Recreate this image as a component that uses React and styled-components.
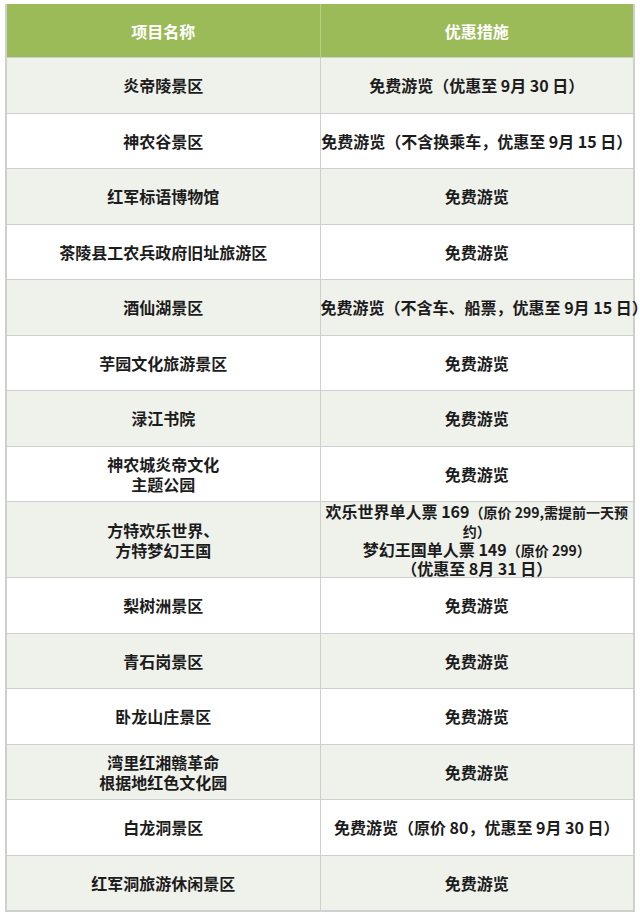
import React from "react";
import styled, { createGlobalStyle } from "styled-components";

const GlobalStyle = createGlobalStyle`
  body {
    margin: 0;
    background: #ffffff;
    font-family: "Noto Sans CJK SC", "Noto Sans", sans-serif;
  }
`;

const Page = styled.div`
  padding: 4px 5px 0 5px;
  width: 640px;
  box-sizing: border-box;
`;

const Table = styled.table`
  width: 630px;
  border-collapse: collapse;
  table-layout: fixed;
  border-left: 2px solid #cfcfcf;
  border-right: 2px solid #cfcfcf;
  border-bottom: 2px solid #cfcfcf;
`;

const HeadCell = styled.th`
  background: #9bbb59;
  color: #ffffff;
  font-size: 16px;
  font-weight: 700;
  height: 53px;
  padding: 0;
  text-align: center;
  border-right: 1px solid #b7cf8a;
  &:last-child {
    border-right: none;
  }
`;

const Row = styled.tr`
  height: ${(p) => p.$h || 55.5}px;
  background: ${(p) => (p.$shade ? "#eff1eb" : "#ffffff")};
`;

const Cell = styled.td`
  padding: 0;
  text-align: center;
  vertical-align: middle;
  font-size: 16px;
  font-weight: 700;
  color: #1c1c1c;
  line-height: ${(p) => p.$lh || 20}px;
  white-space: nowrap;
  overflow: visible;
  border-top: 1px solid #cfcfcf;
  border-right: 1px solid #cfcfcf;
  &:last-child {
    border-right: none;
  }
`;

const Small = styled.span`
  font-size: 14px;
  font-weight: 700;
`;

const rows = [
  ["炎帝陵景区", "免费游览（优惠至 9月 30 日）"],
  ["神农谷景区", "免费游览（不含换乘车，优惠至 9月 15 日）"],
  ["红军标语博物馆", "免费游览"],
  ["茶陵县工农兵政府旧址旅游区", "免费游览"],
  ["酒仙湖景区", "免费游览（不含车、船票，优惠至 9月 15 日）"],
  ["芋园文化旅游景区", "免费游览"],
  ["渌江书院", "免费游览"],
  [["神农城炎帝文化", "主题公园"], "免费游览"],
  ["fangte", "fangte"],
  ["梨树洲景区", "免费游览"],
  ["青石岗景区", "免费游览"],
  ["卧龙山庄景区", "免费游览"],
  [["湾里红湘赣革命", "根据地红色文化园"], "免费游览"],
  ["白龙洞景区", "免费游览（原价 80，优惠至 9月 30 日）"],
  ["红军洞旅游休闲景区", "免费游览"],
];

const Lines = ({ value }) =>
  Array.isArray(value)
    ? value.map((line, i) => (
        <React.Fragment key={i}>
          {i > 0 && <br />}
          {line}
        </React.Fragment>
      ))
    : value;

const FangteRow = ({ shade }) => (
  <Row $shade={shade} $h={74}>
    <Cell>
      方特欢乐世界、
      <br />
      方特梦幻王国
    </Cell>
    <Cell $lh={18}>
      欢乐世界单人票 169<Small>（原价 299,需提前一天预</Small>
      <br />
      <Small>约）</Small>
      <br />
      梦幻王国单人票 149<Small>（原价 299）</Small>
      <br />
      （优惠至 8月 31 日）
    </Cell>
  </Row>
);

export default function App() {
  return (
    <Page>
      <GlobalStyle />
      <Table>
        <thead>
          <tr>
            <HeadCell>项目名称</HeadCell>
            <HeadCell>优惠措施</HeadCell>
          </tr>
        </thead>
        <tbody>
          {rows.map(([name, offer], i) =>
            name === "fangte" ? (
              <FangteRow key={i} shade={i % 2 === 0} />
            ) : (
              <Row key={i} $shade={i % 2 === 0}>
                <Cell>
                  <Lines value={name} />
                </Cell>
                <Cell>{offer}</Cell>
              </Row>
            )
          )}
        </tbody>
      </Table>
    </Page>
  );
}
